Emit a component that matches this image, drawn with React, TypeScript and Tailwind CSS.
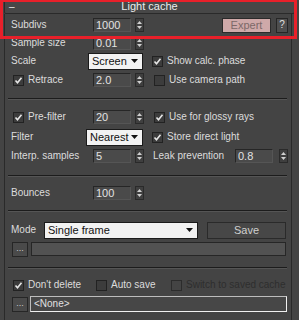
import React from 'react'

function Check({ checked, disabled }: { checked?: boolean; disabled?: boolean }) {
    return (
        <span
            className={`flex h-[11px] w-[11px] shrink-0 items-center justify-center border ${
                disabled ? 'border-[#2c2c2c] bg-[#444444]' : 'border-[#222222] bg-[#3c3c3c]'
            }`}
        >
            {checked && (
                <svg width="9" height="9" viewBox="0 0 9 9">
                    <path d="M1.5 4.5 L3.5 6.8 L7.5 1.8" fill="none" stroke="#e6e6e6" strokeWidth="1.6" />
                </svg>
            )}
        </span>
    )
}

function Spinner({ value, w = 38, gap = 4 }: { value: string; w?: number; gap?: number }) {
    return (
        <div className="flex items-center" style={{ gap }}>
            <div
                className="flex h-[14px] items-center border border-[#262626] border-b-[#555555] border-r-[#555555] bg-[#4a4a4a] pl-[2px] text-[11px] text-[#e2e2e2]"
                style={{ width: w }}
            >
                {value}
            </div>
            <div className="flex h-[14px] w-[9px] flex-col items-center justify-center gap-[2px] border border-[#2a2a2a] bg-[#3f3f3f]">
                <svg width="5" height="3" viewBox="0 0 5 3">
                    <path d="M0 3 L2.5 0 L5 3 Z" fill="#d0d0d0" />
                </svg>
                <svg width="5" height="3" viewBox="0 0 5 3">
                    <path d="M0 0 L2.5 3 L5 0 Z" fill="#d0d0d0" />
                </svg>
            </div>
        </div>
    )
}

function Dropdown({ value, w }: { value: string; w: number }) {
    return (
        <div
            className="flex h-[17px] items-center justify-between border border-[#1a1a1a] bg-[#f2f2f2] pl-[3px] pr-[4px] text-[11px] text-[#111111]"
            style={{ width: w }}
        >
            <span>{value}</span>
            <svg width="7" height="4" viewBox="0 0 7 4">
                <path d="M0 0 L3.5 4 L7 0 Z" fill="#111111" />
            </svg>
        </div>
    )
}

function Sep({ h, at }: { h: number; at: number }) {
    return (
        <div className="mx-[1px]" style={{ height: h, paddingTop: at }}>
            <div className="h-[1px] bg-[#1c1c1c]" />
            <div className="h-[1px] bg-[#555555]" />
        </div>
    )
}

function Dots() {
    return (
        <div className="flex h-[15px] w-[16px] items-end justify-center border border-[#262626] bg-[#4a4a4a] pb-[3px] text-[9px] leading-none text-[#cfcfcf]">
            ...
        </div>
    )
}

export default function App() {
    return (
        <div
            className="relative h-[320px] w-[299px] overflow-hidden bg-[#444444] text-[10px] leading-none text-[#dcdcdc]"
            style={{ fontFamily: '"Liberation Sans", Arial, sans-serif' }}
        >
            {/* Rollout header */}
            <div className="mx-[4px] flex h-[14px] items-end rounded-[2px] border border-[#2a2a2a] border-t-0 bg-[#474747] px-[4px] pb-[1px]">
                <span className="w-[10px] text-[#e8e8e8]">–</span>
                <span className="flex-1 text-center text-[11px] text-[#ececec]">Light cache</span>
                <span className="w-[10px]" />
            </div>

            <div className="ml-[4px] w-[288px] border-x border-[#2a2a2a] pl-[6px] pr-[3px]">
                {/* Subdivs */}
                <div className="flex h-[22px] items-center">
                    <span className="w-[82px]">Subdivs</span>
                    <Spinner value="1000" />
                    <div className="ml-[78px] flex h-[15px] w-[49px] items-center justify-center border border-[#2a2a2a] bg-[#cfa9a9] text-[11px] text-[#7c6868]">
                        Expert
                    </div>
                    <div className="ml-[5px] flex h-[15px] w-[12px] items-center justify-center border border-[#262626] bg-[#4e4e4e] text-[#e0e0e0]">
                        ?
                    </div>
                </div>

                {/* Sample size */}
                <div className="flex h-[14px] items-center">
                    <span className="w-[82px]">Sample size</span>
                    <Spinner value="0.01" />
                </div>

                {/* Scale */}
                <div className="flex h-[22px] items-center">
                    <span className="w-[77px]">Scale</span>
                    <Dropdown value="Screen" w={55} />
                    <div className="ml-[9px] flex items-center gap-[4px]">
                        <Check checked />
                        <span>Show calc. phase</span>
                    </div>
                </div>

                {/* Retrace */}
                <div className="flex h-[16px] items-center">
                    <div className="flex w-[82px] items-center gap-[4px] pl-[2px]">
                        <Check checked />
                        <span>Retrace</span>
                    </div>
                    <Spinner value="2.0" />
                    <div className="ml-[10px] flex items-center gap-[4px]">
                        <Check />
                        <span>Use camera path</span>
                    </div>
                </div>

                <div className="-ml-[4px]">
                    <Sep h={20} at={10} />
                </div>

                {/* Pre-filter */}
                <div className="flex h-[18px] items-center">
                    <div className="flex w-[82px] items-center gap-[4px] pl-[2px]">
                        <Check checked />
                        <span>Pre-filter</span>
                    </div>
                    <Spinner value="20" />
                    <div className="ml-[10px] flex items-center gap-[4px]">
                        <Check checked />
                        <span>Use for glossy rays</span>
                    </div>
                </div>

                {/* Filter */}
                <div className="flex h-[22px] items-center">
                    <span className="w-[75px]">Filter</span>
                    <Dropdown value="Nearest" w={57} />
                    <div className="ml-[9px] flex items-center gap-[4px]">
                        <Check checked />
                        <span>Store direct light</span>
                    </div>
                </div>

                {/* Interp. samples */}
                <div className="flex h-[16px] items-center">
                    <span className="w-[82px]">Interp. samples</span>
                    <Spinner value="5" />
                    <span className="ml-[9px] w-[82px]">Leak prevention</span>
                    <Spinner value="0.8" gap={6} />
                </div>

                <div className="-ml-[4px]">
                    <Sep h={20} at={11} />
                </div>

                {/* Bounces */}
                <div className="flex h-[18px] items-center">
                    <span className="w-[82px]">Bounces</span>
                    <Spinner value="100" />
                </div>

                <div className="-ml-[4px]">
                    <Sep h={18} at={8} />
                </div>

                {/* Mode */}
                <div className="flex h-[20px] items-center">
                    <span className="w-[33px]">Mode</span>
                    <Dropdown value="Single frame" w={154} />
                    <div className="ml-[9px] flex h-[17px] w-[79px] items-center justify-center border border-[#2a2a2a] bg-[#474747] text-[11px] text-[#cfcfcf]">
                        Save
                    </div>
                </div>

                <div className="flex h-[18px] items-center gap-[3px] pl-[1px]">
                    <Dots />
                    <div className="h-[14px] w-[255px] border border-[#262626] bg-[#525252]" />
                </div>

                <div className="-ml-[4px]">
                    <Sep h={18} at={9} />
                </div>

                {/* Cache options */}
                <div className="flex h-[18px] items-center whitespace-nowrap pl-[2px]">
                    <div className="flex w-[83px] items-center gap-[4px]">
                        <Check checked />
                        <span>Don't delete</span>
                    </div>
                    <div className="flex w-[75px] items-center gap-[4px]">
                        <Check />
                        <span>Auto save</span>
                    </div>
                    <div className="flex items-center gap-[4px] text-[#2e2e2e]">
                        <Check disabled />
                        <span>Switch to saved cache</span>
                    </div>
                </div>

                <div className="flex h-[20px] items-center gap-[2px] pl-[1px]">
                    <Dots />
                    <div className="flex h-[16px] w-[257px] items-center border border-[#bdbdbd] border-b-[#f0f0f0] border-r-[#f0f0f0] bg-[#474747] pl-[3px] text-[#e0e0e0]">
                        &lt;None&gt;
                    </div>
                </div>
                <div className="h-[10px]" />
            </div>

            {/* Highlight frame */}
            <div className="pointer-events-none absolute left-0 top-0 h-[39px] w-[297px] border-[3px] border-t-2 border-[#e8202a]" />
        </div>
    )
}
